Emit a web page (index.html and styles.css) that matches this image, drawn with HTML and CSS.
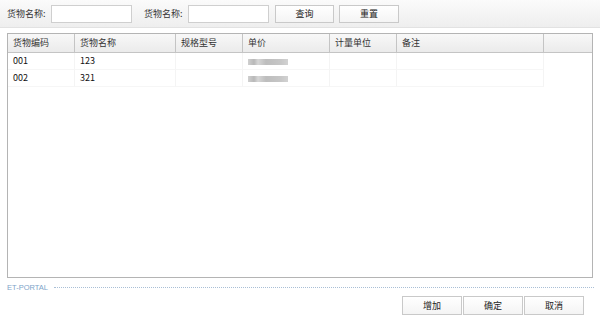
FILE: index.html
```html
<!DOCTYPE html>
<html lang="zh">
<head>
<meta charset="utf-8">
<title>货物选择</title>
<link rel="stylesheet" href="styles.css">
</head>
<body>
<div class="toolbar">
  <label class="lbl">货物名称:</label>
  <input class="inp" type="text">
  <label class="lbl lbl2">货物名称:</label>
  <input class="inp" type="text">
  <button class="btn btn-q">查询</button>
  <button class="btn btn-r">重置</button>
</div>
<div class="grid">
  <div class="row head">
    <div class="cell">货物编码</div>
    <div class="cell">货物名称</div>
    <div class="cell">规格型号</div>
    <div class="cell">单价</div>
    <div class="cell">计量单位</div>
    <div class="cell">备注</div>
    <div class="cell last"></div>
  </div>
  <div class="row data">
    <div class="cell">001</div>
    <div class="cell">123</div>
    <div class="cell"></div>
    <div class="cell"><span class="blur"></span></div>
    <div class="cell"></div>
    <div class="cell"></div>
    <div class="cell last"></div>
  </div>
  <div class="row data">
    <div class="cell">002</div>
    <div class="cell">321</div>
    <div class="cell"></div>
    <div class="cell"><span class="blur b2"></span></div>
    <div class="cell"></div>
    <div class="cell"></div>
    <div class="cell last"></div>
  </div>
</div>
<div class="footer">
  <span class="brand">ET-PORTAL</span>
  <span class="dots"></span>
</div>
<div class="actions">
  <button class="btn btn-b">增加</button>
  <button class="btn btn-b">确定</button>
  <button class="btn btn-b">取消</button>
</div>
</body>
</html>
```
FILE: styles.css
```css
* { box-sizing: border-box; }
html, body { margin: 0; padding: 0; background: #fff; }
body {
  width: 600px;
  height: 322px;
  overflow: hidden;
  font-family: "Noto Sans CJK SC", "Noto Sans", sans-serif;
  font-size: 9px;
  color: #222;
}
.toolbar {
  height: 28px;
  display: flex;
  align-items: center;
  padding-left: 7px;
  background: linear-gradient(#fbfbfb, #eeeeee);
  border-bottom: 1px solid #e2e2e2;
}
.lbl { width: 44px; color: #333; line-height: 1; }
.lbl2 { margin-left: 12px; }
.inp {
  width: 81px;
  height: 18px;
  border: 1px solid #cfcfcf;
  background: #fff;
  margin: 0;
  padding: 0 3px;
  font: inherit;
}
.btn {
  margin: 0;
  padding: 0;
  font-family: "Noto Sans CJK SC", sans-serif;
  font-size: 9px;
  color: #222;
  border: 1px solid #c9c9c9;
  background: linear-gradient(#ffffff, #f4f4f4);
  cursor: pointer;
}
.btn-q { width: 59px; height: 18px; margin-left: 6px; }
.btn-r { width: 60px; height: 18px; margin-left: 5px; }
.grid {
  margin: 5px 0 0 7px;
  width: 586px;
  height: 245px;
  border: 1px solid #b4b4b4;
  background: #fff;
}
.row {
  display: grid;
  grid-template-columns: 67px 101px 67px 87px 67px 147px 48px;
}
.cell {
  padding-left: 5px;
  white-space: nowrap;
  overflow: hidden;
}
.head .cell {
  height: 19px;
  line-height: 18px;
  background: linear-gradient(#f8f8f8, #ebebeb);
  border-right: 1px solid #c4c4c4;
  border-bottom: 1px solid #c4c4c4;
  color: #333;
}
.head .cell.last { border-right: none; }
.data .cell {
  height: 17px;
  line-height: 16px;
  border-right: 1px solid #f4f4f4;
  border-bottom: 1px solid #f6f6f6;
  color: #111;
}
.data .cell.last { border: none; }
.blur {
  display: inline-block;
  vertical-align: middle;
  width: 40px;
  height: 6px;
  background: linear-gradient(90deg, #d0d0d0 0%, #b8b8b8 15%, #d6d6d6 25%, #bdbdbd 45%, #c6c6c6 80%, #d2d2d2 100%);
  filter: blur(0.6px);
}
.footer {
  display: flex;
  align-items: center;
  height: 12px;
  margin-top: 3px;
  padding-left: 7px;
}
.brand {
  font-family: "Liberation Sans", Arial, sans-serif;
  font-size: 7.5px;
  color: #7ea4c9;
}
.dots {
  margin-left: 6px;
  width: 540px;
  border-top: 1px dotted #a9bfd6;
}
.actions {
  display: flex;
  justify-content: flex-end;
  padding-right: 16px;
  margin-top: 3px;
}
.btn-b { width: 60px; height: 19px; margin-left: 1px; }
```
